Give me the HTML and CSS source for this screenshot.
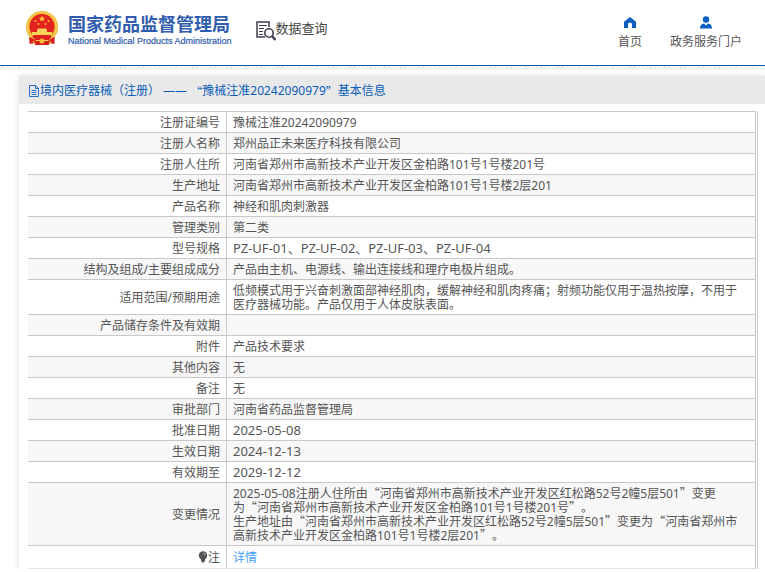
FILE: index.html
```html
<!DOCTYPE html>
<html lang="zh-CN">
<head>
<meta charset="utf-8">
<title>国家药品监督管理局 数据查询</title>
<link rel="stylesheet" href="styles.css">
</head>
<body>
<header class="top">
  <a class="brand" href="#">
    <svg class="emblem" viewBox="0 0 32 36" aria-hidden="true">
      <path d="M4 24l-.5 9 4-.8 2.500 2 3-1h6l3 1 2.500-2 4 .8-.5-9z" fill="#df1f1c"/>
      <circle cx="16" cy="16" r="16" fill="#f2b632"/>
      <circle cx="16" cy="16" r="14.500" fill="none" stroke="#fad56a" stroke-width="1"/>
      <circle cx="16" cy="15.500" r="12.500" fill="#e2231f"/>
      <path d="M16 4.500l.9 2.200 2.400.1-1.900 1.500.7 2.300-2.100-1.300-2.100 1.300.7-2.300-1.900-1.500 2.400-.1z" fill="#fbc93c"/>
      <g fill="#f8b636"><circle cx="9.500" cy="10" r="1.100"/><circle cx="22.500" cy="10" r="1.100"/><circle cx="12.500" cy="13" r="1.100"/><circle cx="19.500" cy="13" r="1.100"/></g>
      <path d="M11 19l1-1.500h8l1 1.500v2h5v3H6v-3h5z" fill="#fbd158"/>
      <path d="M6 25h20l-3 4H9z" fill="#dc211d"/>
      <path d="M3 26q4 1 7 4h12q3-3 7-4l-1 6q-4-1-7 2H11q-3-3-7-2z" fill="#d71e1b"/>
      <circle cx="16" cy="30" r="2.500" fill="#f5bd39"/>
      <path d="M7 30l2 3M25 30l-2 3" stroke="#f5bd39" stroke-width="1.200" fill="none"/>
    </svg>
    <span class="brand-text"><strong>国家药品监督管理局</strong><span>National Medical Products Administration</span></span>
  </a>
  <div class="section">
    <svg class="query" viewBox="0 0 20 20" aria-hidden="true" fill="none" stroke="#3c3f50">
      <path d="M9 16H1V1h12v5" stroke-width="1.500"/>
      <path d="M3 4.500h8M3 7.500h5M3 10.500h4M3 13.500h4" stroke-width="1"/>
      <circle cx="13" cy="12" r="4.200" stroke-width="1.600"/>
      <path d="M16 15l3.500 4" stroke-width="2.400"/>
    </svg><span>数据查询</span>
  </div>
  <nav class="links">
    <a href="#"><svg viewBox="0 0 14 14" aria-hidden="true"><path d="M7 1l6 4.800V12H9V8.500a2 2 0 0 0-4 0V12H1V5.800z" fill="#0a5fc2"/></svg>首页</a>
    <a href="#"><svg viewBox="0 0 14 14" aria-hidden="true"><circle cx="7" cy="3.500" r="3.200" fill="#0a5fc2"/><path d="M1 12.500q0-4.500 4-5l2 2 2-2q4 .5 4 5z" fill="#0a5fc2"/></svg>政务服务门户</a>
  </nav>
</header>
<div class="hatch"></div>
<main class="card">
  <h1 class="title"><svg viewBox="0 0 12 12" aria-hidden="true" fill="none" stroke="#2a6fc4"><path d="M1.500.5h6l3 3v8h-9zM7.500.5v3h3M3.500 5.500h5M3.500 7.500h5M3.500 9.500h5"/></svg>境内医疗器械（注册）&nbsp;——&nbsp;<span class="cjk">“</span>豫械注准20242090979<span class="cjk">”</span>基本信息</h1>
  <div class="frame">
    <table class="info">
      <tr><th scope="row">注册证编号</th><td>豫械注准20242090979</td></tr>
      <tr><th scope="row">注册人名称</th><td>郑州品正未来医疗科技有限公司</td></tr>
      <tr><th scope="row">注册人住所</th><td>河南省郑州市高新技术产业开发区金柏路101号1号楼201号</td></tr>
      <tr><th scope="row">生产地址</th><td>河南省郑州市高新技术产业开发区金柏路101号1号楼2层201</td></tr>
      <tr><th scope="row">产品名称</th><td>神经和肌肉刺激器</td></tr>
      <tr><th scope="row">管理类别</th><td>第二类</td></tr>
      <tr><th scope="row">型号规格</th><td class="code">PZ-UF-01、PZ-UF-02、PZ-UF-03、PZ-UF-04</td></tr>
      <tr><th scope="row">结构及组成/主要组成成分</th><td>产品由主机、电源线、输出连接线和理疗电极片组成。</td></tr>
      <tr><th scope="row">适用范围/预期用途</th><td>低频模式用于兴奋刺激面部神经肌肉，缓解神经和肌肉疼痛；射频功能仅用于温热按摩，不用于医疗器械功能。产品仅用于人体皮肤表面。</td></tr>
      <tr><th scope="row">产品储存条件及有效期</th><td></td></tr>
      <tr><th scope="row">附件</th><td>产品技术要求</td></tr>
      <tr><th scope="row">其他内容</th><td>无</td></tr>
      <tr><th scope="row">备注</th><td>无</td></tr>
      <tr><th scope="row">审批部门</th><td>河南省药品监督管理局</td></tr>
      <tr><th scope="row">批准日期</th><td class="code">2025-05-08</td></tr>
      <tr><th scope="row">生效日期</th><td class="code">2024-12-13</td></tr>
      <tr><th scope="row">有效期至</th><td class="code">2029-12-12</td></tr>
      <tr><th scope="row">变更情况</th><td>2025-05-08注册人住所由<span class="cjk">“</span>河南省郑州市高新技术产业开发区红松路52号2幢5层501<span class="cjk">”</span>变更<br>为<span class="cjk">“</span>河南省郑州市高新技术产业开发区金柏路101号1号楼201号<span class="cjk">”</span>。<br>生产地址由<span class="cjk">“</span>河南省郑州市高新技术产业开发区红松路52号2幢5层501<span class="cjk">”</span>变更为<span class="cjk">“</span>河南省郑州市<br>高新技术产业开发区金柏路101号1号楼2层201<span class="cjk">”</span>。</td></tr>
      <tr class="note"><th scope="row"><svg viewBox="0 0 10 12" aria-hidden="true"><circle cx="5" cy="4.500" r="4.200" fill="#555"/><path d="M3 8h4v1.500L6 11.500H4L3 9.500z" fill="#555"/><path d="M5.500 2q1.500.5 1.800 2" stroke="#ccc" fill="none"/></svg>注</th><td><a href="#">详情</a></td></tr>
    </table>
  </div>
</main>
</body>
</html>
```
FILE: styles.css
```css
* { box-sizing: border-box; }

html { overflow: hidden; }

body {
  margin: 0;
  background: #fff;
  color: #555;
  font: 12px/14px "Noto Sans", "Noto Sans CJK SC", sans-serif;
  text-spacing-trim: space-all;
}

a { color: inherit; text-decoration: none; }

.cjk { font-family: "Noto Sans CJK SC", sans-serif; line-height: 1px; }

.top {
  display: flex;
  align-items: flex-start;
  height: 66px;
  padding: 0 23px 0 26px;
  border-bottom: 1px solid #0a5cab;
}

.brand {
  display: flex;
  gap: 10px;
  padding-top: 11px;
  color: #2f5cad;
}

.emblem { width: 32px; height: 36px; }

.brand-text {
  display: flex;
  flex-direction: column;
  white-space: nowrap;
}

.brand-text strong {
  font: bold 18px/25px "Noto Sans CJK SC", sans-serif;
}

.brand-text span {
  font: 9px/10px "Liberation Sans", sans-serif;
  -webkit-text-stroke: 0.2px;
}

.section {
  display: flex;
  margin-left: 24px;
  padding-top: 17px;
  color: #444;
  font: 13px/22px "Noto Sans CJK SC", sans-serif;
}

.query { width: 20px; height: 20px; margin-top: 4px; }

.links {
  display: flex;
  gap: 28px;
  margin-left: auto;
  padding-top: 16px;
}

.links a {
  display: flex;
  flex-direction: column;
  align-items: center;
  gap: 4px;
  line-height: 16px;
}

.links svg { width: 14px; height: 14px; }

.hatch {
  height: 3px;
  background: repeating-linear-gradient(135deg, #fff 0 2px, #e6e6e6 2px 3px);
}

.card {
  margin: 7px 0 0 19px;
  box-shadow: 0 0 6px rgba(0, 0, 0, 0.15);
}

.title {
  display: flex;
  align-items: center;
  height: 28px;
  margin: 0;
  padding: 2px 0 0 9px;
  background: #e9e9e9;
  color: #0a5cb8;
  font-size: 12px;
  font-weight: normal;
  white-space: nowrap;
}

.title svg { width: 12px; height: 12px; }

.frame {
  margin: 7px 7px 0 9px;
  padding-right: 1px;
  border-right: 1px solid #d0d0d8;
}

.info {
  width: 100%;
  border-collapse: separate;
  border-spacing: 0;
  border-top: 1px solid #c8c8c8;
  table-layout: fixed;
}

.info tr:nth-child(even) { background: #f7f7f7; }

.info th,
.info td {
  height: 21px;
  padding: 4px 6px 2px;
  border-right: 1px solid #c8c8c8;
  border-bottom: 1px solid #c8c8c8;
  font-weight: normal;
  text-align: left;
}

.info th { width: 199px; text-align: right; }

.info td { padding-right: 10px; }

.info .code { padding-top: 3px; padding-bottom: 3px; font-size: 13px; }

.info .note th,
.info .note td { height: 23px; border-bottom-color: #e4e4ee; }

.info td a { color: #409eff; }

.note svg { width: 10px; height: 12px; vertical-align: -1px; }
```
